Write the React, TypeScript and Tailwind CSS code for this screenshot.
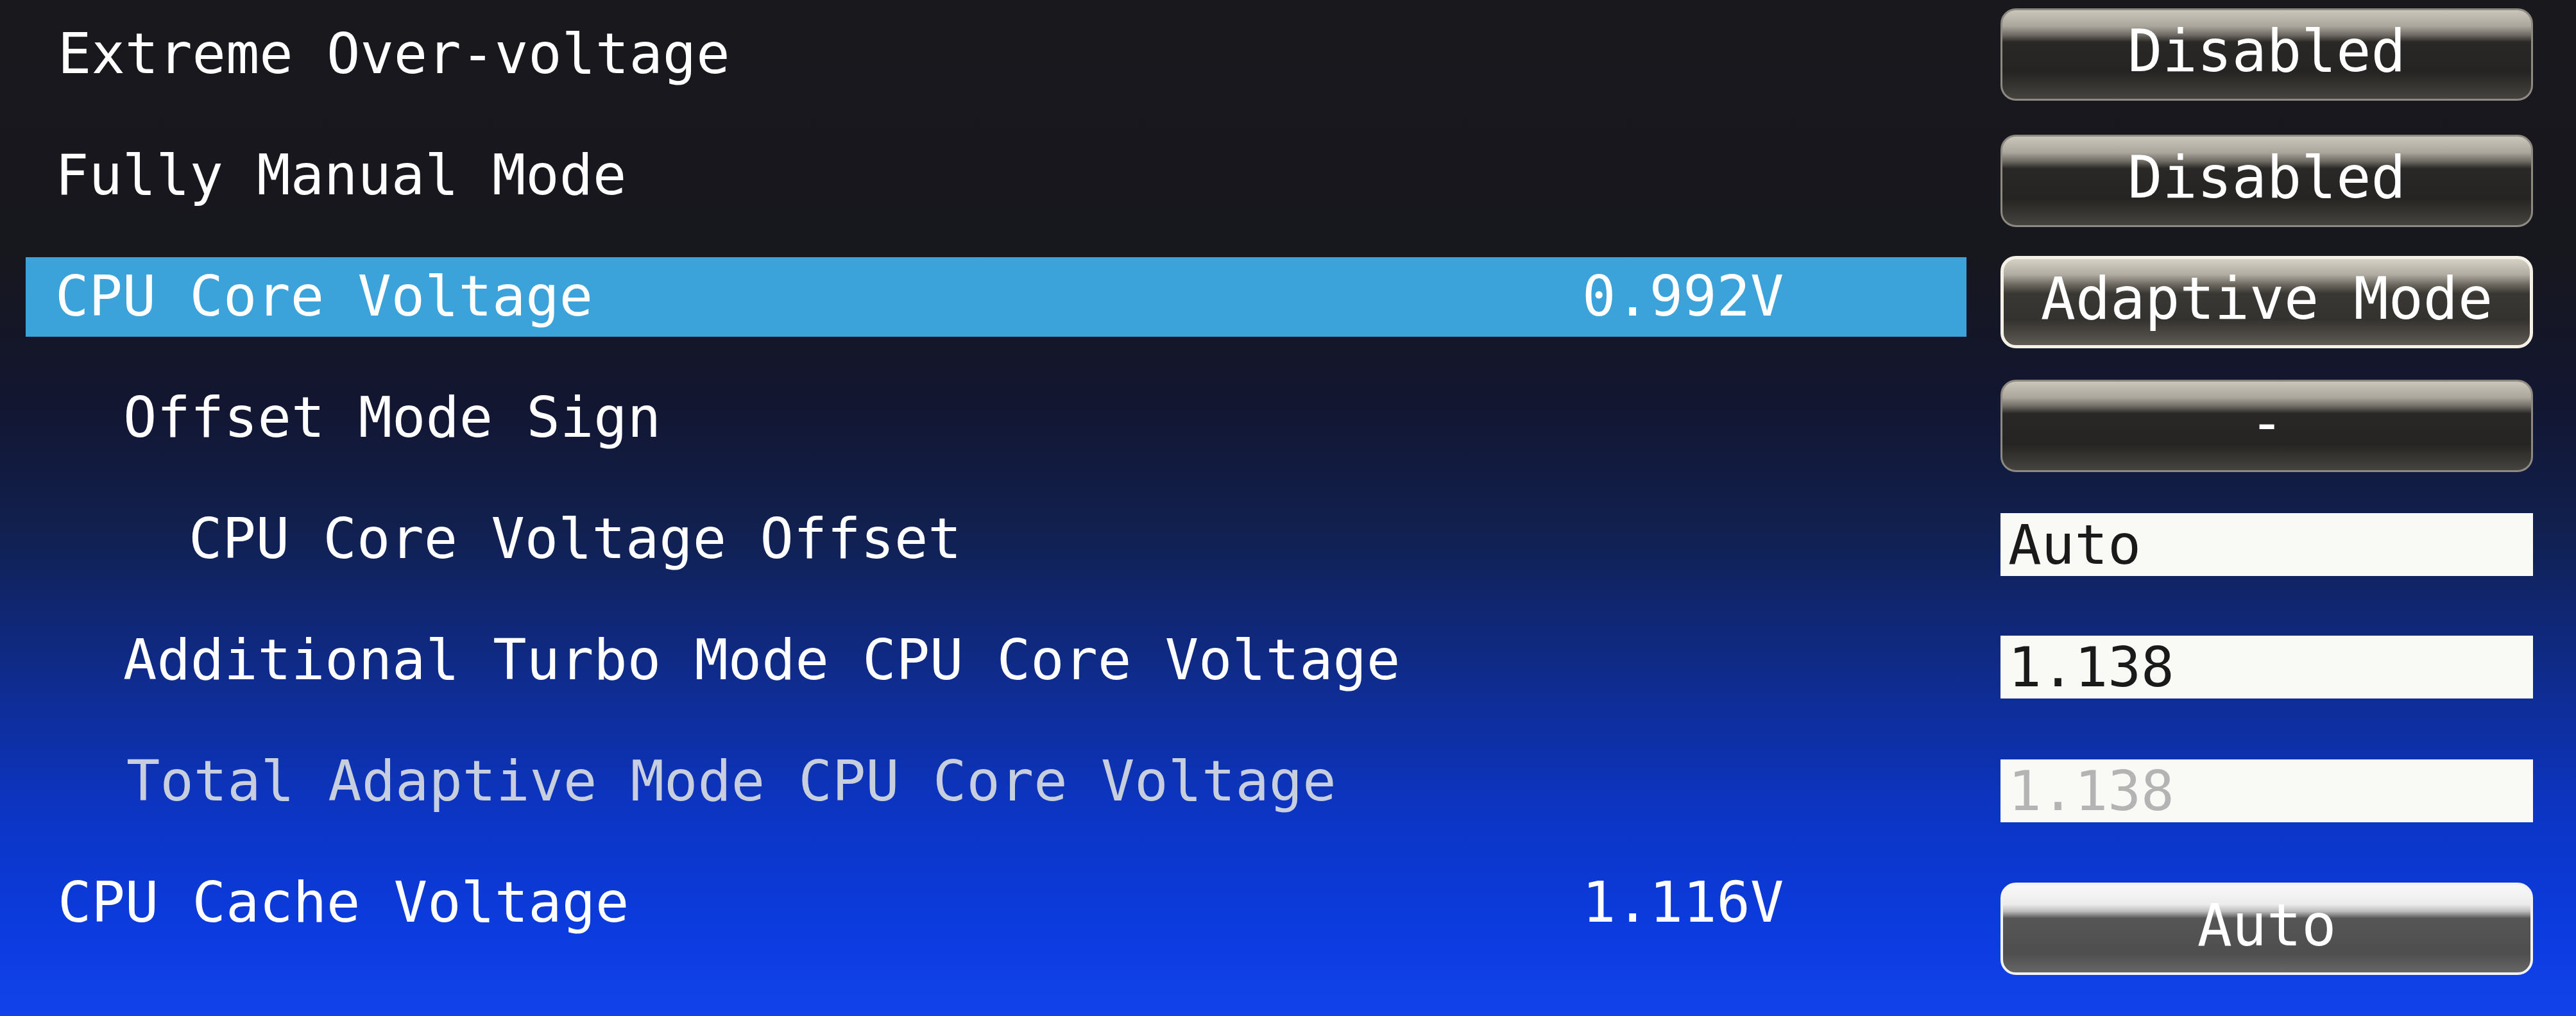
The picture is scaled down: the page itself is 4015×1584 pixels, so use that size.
type Control =
  | { kind: "button"; text: string; variant: "normal" | "selected" | "bright" }
  | { kind: "input"; text: string; disabled?: boolean };

interface Row {
  label: string;
  indent: string;
  value?: string;
  active?: boolean;
  dim?: boolean;
  shift: string;
  control: Control;
}

const rows: Row[] = [
  { label: "Extreme Over-voltage", indent: "pl-[50px]", shift: "translate-y-0", control: { kind: "button", text: "Disabled", variant: "normal" } },
  { label: "Fully Manual Mode", indent: "pl-[46px]", shift: "translate-y-[8px]", control: { kind: "button", text: "Disabled", variant: "normal" } },
  { label: "CPU Core Voltage", indent: "pl-[46px]", value: "0.992V", active: true, shift: "translate-y-[8px]", control: { kind: "button", text: "Adaptive Mode", variant: "selected" } },
  { label: "Offset Mode Sign", indent: "pl-[152px]", shift: "translate-y-[12px]", control: { kind: "button", text: "-", variant: "normal" } },
  { label: "CPU Core Voltage Offset", indent: "pl-[254px]", shift: "translate-y-[8px]", control: { kind: "input", text: "Auto" } },
  { label: "Additional Turbo Mode CPU Core Voltage", indent: "pl-[152px]", shift: "translate-y-[10px]", control: { kind: "input", text: "1.138" } },
  { label: "Total Adaptive Mode CPU Core Voltage", indent: "pl-[157px]", dim: true, shift: "translate-y-[14px]", control: { kind: "input", text: "1.138", disabled: true } },
  { label: "CPU Cache Voltage", indent: "pl-[50px]", value: "1.116V", shift: "translate-y-[40px]", control: { kind: "button", text: "Auto", variant: "bright" } },
];

const mono = "font-['DejaVu_Sans_Mono','Liberation_Mono',monospace]";

function BiosButton({ text, variant }: { text: string; variant: "normal" | "selected" | "bright" }) {
  const look =
    variant === "selected"
      ? "border-[5px] border-[#f4f0e6] bg-[linear-gradient(180deg,#d6d1c4_0%,#b0aca2_18%,#6a665e_30%,#3a3834_40%,#34322e_70%,#5e5a54_100%)]"
      : variant === "bright"
        ? "border-[4px] border-[#f2f2f2] bg-[linear-gradient(180deg,#f8f8f8_0%,#ececec_22%,#bdbdbd_30%,#565656_38%,#4e4e4e_78%,#666666_100%)]"
        : "border-[3px] border-[#8e8a82] bg-[linear-gradient(180deg,#cac6ba_0%,#aaa69c_18%,#6e6a64_28%,#2a2826_36%,#262422_70%,#46443f_100%)]";
  return (
    <div
      className={`flex h-[144px] w-[830px] items-center justify-center rounded-[24px] pb-[10px] text-[90px] leading-none text-white ${mono} ${look}`}
    >
      {text}
    </div>
  );
}

function BiosInput({ text, disabled }: { text: string; disabled?: boolean }) {
  return (
    <div
      className={`flex h-[98px] w-[830px] items-center bg-[#f9f9f6] pl-[12px] text-[86px] font-light leading-none ${mono} ${
        disabled ? "text-[#b4b4b4]" : "text-[#1a1a1a]"
      }`}
    >
      {text}
    </div>
  );
}

export default function App() {
  return (
    <div className="h-[1584px] w-[4015px] overflow-hidden bg-[linear-gradient(180deg,#19181d_0%,#17171e_25%,#121631_40%,#11204f_52%,#0f2b8a_66%,#0c35c4_80%,#0c3ce0_92%,#1243ea_100%)]">
      <div className="-mt-[10px] flex flex-col">
        {rows.map((row, i) => (
          <div key={i} className="flex h-[189px] items-center">
            <div
              className={`ml-[40px] flex h-[124px] w-[3025px] items-center ${row.active ? "bg-[#3ba2da]" : ""}`}
            >
              <span
                className={`flex-1 whitespace-pre text-[87px] leading-none ${mono} ${row.indent} ${
                  row.dim ? "text-[#c7cedd]" : "text-white"
                }`}
              >
                {row.label}
              </span>
              {row.value && (
                <span className={`w-[599px] text-[87px] leading-none text-white ${mono}`}>{row.value}</span>
              )}
            </div>
            <div className={`ml-[53px] ${row.shift}`}>
              {row.control.kind === "button" ? (
                <BiosButton text={row.control.text} variant={row.control.variant} />
              ) : (
                <BiosInput text={row.control.text} disabled={row.control.disabled} />
              )}
            </div>
          </div>
        ))}
      </div>
    </div>
  );
}
